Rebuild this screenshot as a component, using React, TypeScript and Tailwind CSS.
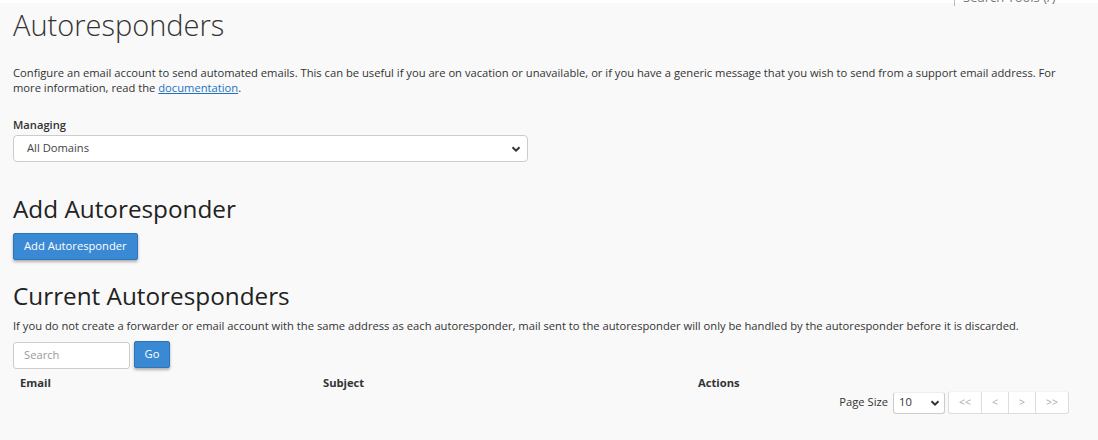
export default function App() {
  const font = { fontFamily: '"Open Sans", "Liberation Sans", sans-serif' };

  return (
    <div style={font} className="w-[1098px] h-[440px] overflow-hidden bg-[#f9f9f9] text-[#333]">
      {/* cut-off top bar with the tools search */}
      <div className="h-[3px] bg-white relative">
        <div className="absolute left-[954px] top-0 w-[130px] h-[6px] overflow-hidden border-l border-[#bbb]">
          <span className="absolute left-[8px] -top-[11px] text-[13px] text-[#777] leading-[16px] whitespace-nowrap">Search Tools (/)</span>
        </div>
      </div>

      <div className="px-[13px]">
        <h1 className="text-[29px] font-light leading-[33px] mt-[5px] text-[#333]">Autoresponders</h1>

        <p className="text-[11.2px] leading-[15px] mt-[24px] pr-[20px]">
          Configure an email account to send automated emails. This can be useful if you are on vacation or unavailable, or if you have a generic message that you wish to send from a support email address. For more information, read the{' '}
          <a href="#" className="text-[#1d72c2] underline">documentation</a>.
        </p>

        <div className="mt-[22px]">
          <label className="block text-[11.2px] font-semibold leading-[15px]">Managing</label>
          <div className="mt-[3px] w-[515px] h-[27px] bg-white border border-[#ccc] rounded-[4px] flex items-center justify-between pl-[13px] pr-[5px]">
            <span className="text-[11.2px] text-[#444]">All Domains</span>
            <svg width="12" height="12" viewBox="0 0 12 12"><path d="M2.5 4.2 6 7.7 9.5 4.2" fill="none" stroke="#333" strokeWidth="2" /></svg>
          </div>
        </div>

        <h2 className="text-[24.3px] leading-[26px] mt-[34px] text-[#222]">Add Autoresponder</h2>
        <button className="mt-[11px] h-[27px] px-[10px] bg-[#3a89d4] border border-[#2f74b8] rounded-[2px] text-white text-[11.2px] font-medium shadow-[0_2px_3px_rgba(0,0,0,0.3)]">
          Add Autoresponder
        </button>

        <h2 className="text-[24.3px] leading-[26px] mt-[23px] text-[#222]">Current Autoresponders</h2>
        <p className="text-[11.2px] leading-[15px] mt-[9px]">
          If you do not create a forwarder or email account with the same address as each autoresponder, mail sent to the autoresponder will only be handled by the autoresponder before it is discarded.
        </p>

        <div className="mt-[8px] flex items-start gap-[4px]">
          <div className="w-[117px] h-[27px] mt-[1px] bg-white border border-[#ccc] rounded-[3px] flex items-center pl-[10px] text-[11.2px] text-[#999]">Search</div>
          <button className="w-[36px] h-[27px] bg-[#3a89d4] border border-[#2f74b8] rounded-[2px] text-white text-[11.2px] shadow-[0_2px_3px_rgba(0,0,0,0.3)]">Go</button>
        </div>

        <div className="mt-[6px] flex text-[11.2px] font-bold leading-[15px] text-[#333]">
          <div className="w-[303px] pl-[7px]">Email</div>
          <div className="w-[375px] pl-[7px]">Subject</div>
          <div className="pl-[7px]">Actions</div>
        </div>

        <div className="mt-[1px] flex justify-end items-center pr-[16px]">
          <span className="text-[11.2px] mr-[5px]">Page Size</span>
          <div className="w-[52px] h-[22px] bg-white border border-[#ccc] border-t-[#eee] rounded-[3px] flex items-center justify-between pl-[5px] pr-[3px] text-[11.2px]">
            <span>10</span>
            <svg width="12" height="12" viewBox="0 0 12 12"><path d="M2.5 4.2 6 7.7 9.5 4.2" fill="none" stroke="#333" strokeWidth="2" /></svg>
          </div>
          <div className="ml-[3px] flex h-[23px] bg-white border border-[#ddd] border-t-[#f3f3f3] rounded-[3px] text-[10.5px] text-[#aaa]">
            <div className="w-[33px] flex items-center justify-center border-r border-[#ddd]">&lt;&lt;</div>
            <div className="w-[27px] flex items-center justify-center border-r border-[#ddd]">&lt;</div>
            <div className="w-[27px] flex items-center justify-center border-r border-[#ddd]">&gt;</div>
            <div className="w-[32px] flex items-center justify-center">&gt;&gt;</div>
          </div>
        </div>
      </div>
    </div>
  );
}
